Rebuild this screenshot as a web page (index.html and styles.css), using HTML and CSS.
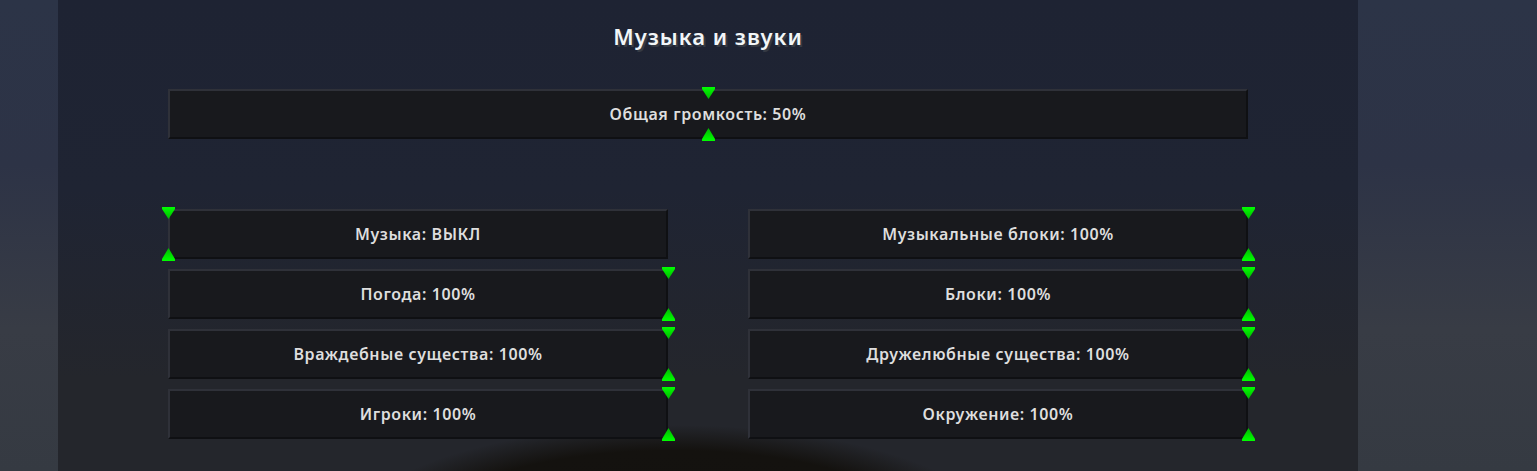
FILE: index.html
```html
<!DOCTYPE html>
<html>
<head>
  <title>Музыка и звуки</title>
  <link rel="stylesheet" href="styles.css">
</head>
<body>

<div id="screen">
<div id="panel">
  <h1 class="title">Музыка и звуки</h1>

  <div class="master">
    <div class="slider">
      <span class="label">Общая громкость: 50%</span>
      <div class="track"><svg class="handle" style="left:50%" viewBox="0 0 13 54"><use href="#knob"/></svg></div>
    </div>
  </div>

  <div class="grid">
    <div class="slider">
      <span class="label">Музыка: ВЫКЛ</span>
      <div class="track"><svg class="handle" style="left:0%" viewBox="0 0 13 54"><use href="#knob"/></svg></div>
    </div>
    <div class="slider">
      <span class="label">Музыкальные блоки: 100%</span>
      <div class="track"><svg class="handle" style="left:100%" viewBox="0 0 13 54"><use href="#knob"/></svg></div>
    </div>
    <div class="slider">
      <span class="label">Погода: 100%</span>
      <div class="track"><svg class="handle" style="left:100%" viewBox="0 0 13 54"><use href="#knob"/></svg></div>
    </div>
    <div class="slider">
      <span class="label">Блоки: 100%</span>
      <div class="track"><svg class="handle" style="left:100%" viewBox="0 0 13 54"><use href="#knob"/></svg></div>
    </div>
    <div class="slider">
      <span class="label">Враждебные существа: 100%</span>
      <div class="track"><svg class="handle" style="left:100%" viewBox="0 0 13 54"><use href="#knob"/></svg></div>
    </div>
    <div class="slider">
      <span class="label">Дружелюбные существа: 100%</span>
      <div class="track"><svg class="handle" style="left:100%" viewBox="0 0 13 54"><use href="#knob"/></svg></div>
    </div>
    <div class="slider">
      <span class="label">Игроки: 100%</span>
      <div class="track"><svg class="handle" style="left:100%" viewBox="0 0 13 54"><use href="#knob"/></svg></div>
    </div>
    <div class="slider">
      <span class="label">Окружение: 100%</span>
      <div class="track"><svg class="handle" style="left:100%" viewBox="0 0 13 54"><use href="#knob"/></svg></div>
    </div>
  </div>
</div>
</div>

<!-- shared slider knob -->
<svg width="0" height="0" class="defs">
  <defs>
    <linearGradient id="gdown" x1="0" y1="0" x2="0" y2="1">
      <stop offset="0" stop-color="#00ff00"/>
      <stop offset="1" stop-color="#00b800"/>
    </linearGradient>
    <linearGradient id="gup" x1="0" y1="0" x2="0" y2="1">
      <stop offset="0" stop-color="#00b800"/>
      <stop offset="1" stop-color="#00ff00"/>
    </linearGradient>
    <g id="knob">
      <polygon points="0,0 13,0 13,2 6.5,12 0,2" fill="url(#gdown)"/>
      <polygon points="6.5,41 13,52 13,54 0,54 0,52" fill="url(#gup)"/>
    </g>
  </defs>
</svg>

</body>
</html>
```

FILE: styles.css
```css
html, body {
  margin: 0;
  height: 100%;
}
body {
  background: linear-gradient(#2c3447 0%, #2d3346 35%, #383c45 70%, #353a42 100%);
  font-family: "Noto Sans", "Open Sans", sans-serif;
  overflow: hidden;
}
#screen {
  height: 471px;
  padding-left: 58px;
}
#panel {
  width: 1300px;
  height: 471px;
  box-sizing: border-box;
  padding-top: 21px;
  background:
    radial-gradient(ellipse 330px 115px at 615px 540px, #13110f 0%, #14120f 78%, rgba(36,38,44,0) 100%),
    linear-gradient(#1e2333 0%, #1f2433 40%, #24262c 80%, #24262c 100%);
}
.title {
  margin: 0;
  height: 30px;
  line-height: 30px;
  text-align: center;
  font-size: 22px;
  font-weight: 600;
  letter-spacing: 1px;
  color: #f2f6f8;
  text-shadow: 2px 2px 0 #353a44;
}
.master {
  width: 1080px;
  margin: 38px auto 0 auto;
}
.grid {
  width: 1080px;
  margin: 70px auto 0 auto;
  display: grid;
  grid-template-columns: 500px 500px;
  column-gap: 80px;
  row-gap: 10px;
}
.slider {
  position: relative;
  height: 50px;
  box-sizing: border-box;
  background: #18191d;
  border-top: 2px solid #2f3139;
  border-left: 2px solid #2f3139;
  border-bottom: 2px solid #0f1013;
  border-right: 2px solid #0f1013;
  display: flex;
  align-items: center;
  justify-content: center;
}
.label {
  color: #dedede;
  font-size: 16px;
  font-weight: 600;
  letter-spacing: 0.6px;
}
/* track spans the full border box so 0%/100% land on the outer edges */
.track {
  position: absolute;
  top: -2px;
  bottom: -2px;
  left: -2px;
  right: -2px;
}
.handle {
  position: absolute;
  top: -2px;
  width: 13px;
  height: 54px;
  margin-left: -6.5px;
}
.defs {
  position: absolute;
}
```
